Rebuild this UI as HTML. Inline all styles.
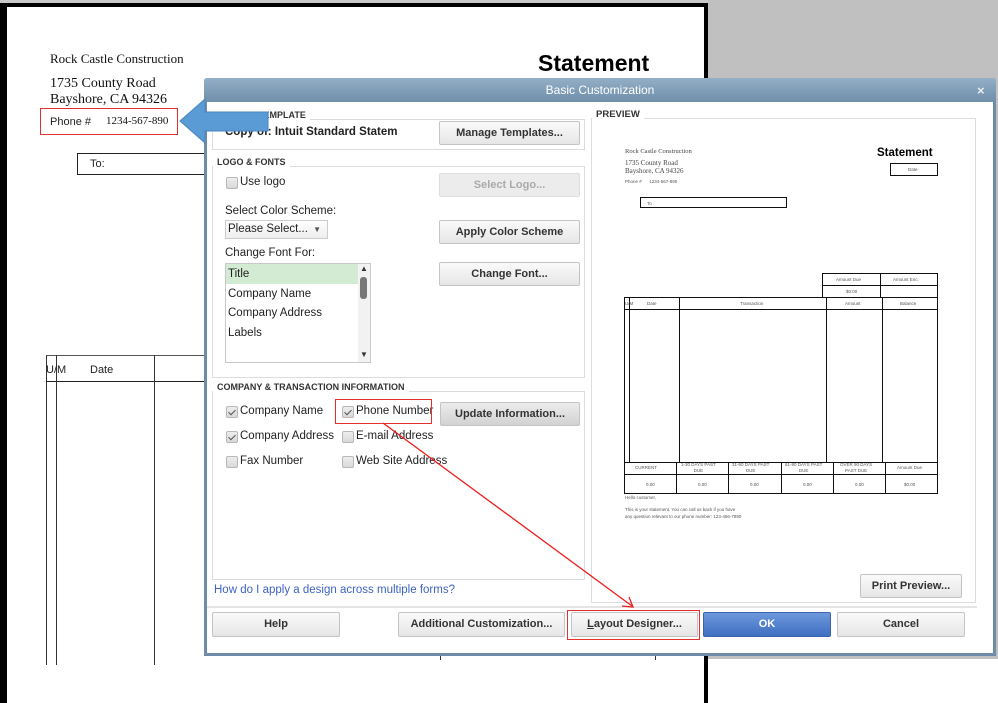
<!DOCTYPE html>
<html><head><meta charset="utf-8"><style>
*{box-sizing:border-box;margin:0;padding:0}
body{width:998px;height:659px;overflow:hidden;position:relative;background:#fff;font-family:"Liberation Sans",sans-serif;font-size:11.5px;color:#222}
.a{position:absolute}
.serif{font-family:"Liberation Serif",serif;color:#111}
.btn{position:absolute;border:1px solid #c4c4c4;border-radius:2px;background:linear-gradient(#fafafa,#e6e6e6);text-align:center;font-weight:bold;color:#333;font-size:11px}
.grp{position:absolute;border:1px solid #dcdcdc}
.lbl{position:absolute;background:#fff;font-weight:bold;font-size:9px;color:#333;padding:0 4px 0 4px}
.cb{position:absolute;width:12px;height:12px;border:1px solid #b8b8b8;border-radius:2px;background:linear-gradient(#eee,#d8d8d8)}
.cb.on::after{content:"";position:absolute;left:3px;top:1px;width:3px;height:6px;border:solid #555;border-width:0 1.5px 1.5px 0;transform:rotate(45deg)}
.t{position:absolute;font-size:11.5px;color:#222;white-space:nowrap}
.pv{position:absolute;border:1px solid #111}
.tiny{position:absolute;font-size:4.5px;color:#555;white-space:nowrap}
</style></head><body>
<div class="a" style="left:0;top:0;width:998px;height:3px;background:#c8c8c8"></div>
<div class="a" style="left:708px;top:0;width:290px;height:659px;background:#c0c0c0"></div>
<div class="a" style="left:0;top:3px;width:708px;height:700px;border:solid #000;border-width:4px 0 0 7px;border-right:4px solid #000;background:#fff"></div>
<div class="a serif" style="left:50px;top:51px;font-size:13px">Rock Castle Construction</div>
<div class="a serif" style="left:50px;top:76px;font-size:14px;line-height:16px">1735 County Road<br>Bayshore, CA 94326</div>
<div class="a" style="left:40px;top:108px;width:138px;height:27px;border:1px solid #e23030"></div>
<div class="a" style="left:50px;top:116px;font-size:11px">Phone #</div>
<div class="a serif" style="left:106px;top:115px;font-size:11px">1234-567-890</div>
<div class="a" style="left:77px;top:153px;width:140px;height:22px;border:1px solid #222;border-width:1px 0 1.5px 1px"></div>
<div class="a" style="left:90px;top:158px;font-size:11px">To:</div>
<div class="a" style="left:538px;top:50px;font-size:23px;font-weight:bold;color:#000">Statement</div>
<div class="a" style="left:46px;top:355px;width:170px;height:310px;border-left:1px solid #333;border-top:1px solid #555"></div>
<div class="a" style="left:46px;top:381px;width:170px;border-top:1px solid #222"></div>
<div class="a" style="left:56px;top:355px;height:310px;border-left:1px solid #333"></div>
<div class="a" style="left:154px;top:355px;height:310px;border-left:1px solid #333"></div>
<div class="a" style="left:46px;top:364px;font-size:11px">U/M</div>
<div class="a" style="left:90px;top:364px;font-size:11px">Date</div>
<div class="a" style="left:440px;top:650px;height:10px;border-left:1px solid #333"></div>
<div class="a" style="left:655px;top:650px;height:10px;border-left:1px solid #333"></div>

<div class="a" style="left:204px;top:78px;width:792px;height:578px;background:#6e8ca8;border-radius:3px 3px 0 0"></div>
<div class="a" style="left:204px;top:78px;width:792px;height:24px;background:linear-gradient(#94afc6,#6f8eaa);border-radius:3px 3px 0 0;color:#fff;text-align:center;line-height:25px;font-size:12px">Basic Customization</div>
<div class="a" style="left:977px;top:83px;color:#e8eef3;font-weight:bold;font-size:13px">×</div>
<div class="a" style="left:207px;top:102px;width:786px;height:551px;background:#fff"></div>

<div class="grp" style="left:212px;top:119px;width:373px;height:31px"></div>
<div class="lbl" style="left:216px;top:110px">SELECT TEMPLATE</div>
<div class="a" style="left:225px;top:126px;font-weight:bold;font-size:11.5px">Copy of: Intuit Standard Statem</div>
<div class="btn" style="left:439px;top:121px;width:141px;height:24px;line-height:22px">Manage Templates...</div>
<div class="grp" style="left:212px;top:166px;width:373px;height:212px"></div>
<div class="lbl" style="left:213px;top:157px">LOGO &amp; FONTS</div>
<div class="cb" style="left:226px;top:177px"></div><div class="t" style="left:240px;top:176px">Use logo</div>
<div class="btn" style="left:439px;top:173px;width:141px;height:24px;line-height:22px;color:#aaa;background:#ececec;border-color:#ddd">Select Logo...</div>
<div class="t" style="left:225px;top:205px">Select Color Scheme:</div>
<div class="a" style="left:225px;top:220px;width:103px;height:19px;border:1px solid #ccc;background:linear-gradient(#fff,#eee);font-size:11.5px;padding:2px 0 0 2px">Please Select...<span style="position:absolute;right:6px;top:4px;font-size:8px;color:#555">▼</span></div>
<div class="btn" style="left:439px;top:220px;width:141px;height:24px;line-height:22px">Apply Color Scheme</div>
<div class="t" style="left:225px;top:247px">Change Font For:</div>
<div class="a" style="left:225px;top:263px;width:146px;height:100px;border:1px solid #c8c8c8;background:#fff"></div>
<div class="a" style="left:226px;top:264px;width:132px;height:20px;background:#d3ebd3"></div>
<div class="t" style="left:228px;top:268px">Title</div>
<div class="t" style="left:228px;top:288px">Company Name</div>
<div class="t" style="left:228px;top:307px">Company Address</div>
<div class="t" style="left:228px;top:327px">Labels</div>
<div class="a" style="left:358px;top:264px;width:12px;height:98px;background:#f2f2f2"></div>
<div class="a" style="left:360px;top:264px;font-size:8px;color:#333">▲</div>
<div class="a" style="left:360px;top:350px;font-size:8px;color:#333">▼</div>
<div class="a" style="left:360px;top:277px;width:7px;height:22px;background:#777;border-radius:3px"></div>
<div class="btn" style="left:439px;top:262px;width:141px;height:24px;line-height:22px">Change Font...</div>
<div class="grp" style="left:212px;top:391px;width:373px;height:189px"></div>
<div class="lbl" style="left:213px;top:382px">COMPANY &amp; TRANSACTION INFORMATION</div>
<div class="cb on" style="left:226px;top:406px"></div><div class="t" style="left:240px;top:405px">Company Name</div>
<div class="cb on" style="left:226px;top:431px"></div><div class="t" style="left:240px;top:430px">Company Address</div>
<div class="cb" style="left:226px;top:456px"></div><div class="t" style="left:240px;top:455px">Fax Number</div>
<div class="cb on" style="left:342px;top:406px"></div><div class="t" style="left:356px;top:405px">Phone Number</div>
<div class="cb" style="left:342px;top:431px"></div><div class="t" style="left:356px;top:430px">E-mail Address</div>
<div class="cb" style="left:342px;top:456px"></div><div class="t" style="left:356px;top:455px">Web Site Address</div>
<div class="a" style="left:335px;top:399px;width:97px;height:25px;border:1px solid #e23030"></div>
<div class="btn" style="left:440px;top:402px;width:140px;height:24px;line-height:22px;background:linear-gradient(#ececec,#d2d2d2)">Update Information...</div>
<div class="t" style="left:214px;top:584px;color:#3e63c4">How do I apply a design across multiple forms?</div>
<div class="grp" style="left:591px;top:118px;width:385px;height:485px"></div>
<div class="lbl" style="left:592px;top:109px;font-size:9.5px">PREVIEW</div>
<div class="a serif" style="left:625px;top:148px;font-size:6.5px;color:#444">Rock Castle Construction</div>
<div class="a serif" style="left:625px;top:159px;font-size:7px;color:#444;line-height:8px">1735 County Road<br>Bayshore, CA 94326</div>
<div class="tiny" style="left:625px;top:179px">Phone #&nbsp;&nbsp;&nbsp;&nbsp;&nbsp;&nbsp;1234-567-890</div>
<div class="a" style="left:877px;top:147px;font-size:11.5px;font-weight:bold;color:#000">Statement</div>
<div class="pv" style="left:890px;top:163px;width:48px;height:13px"></div><div class="tiny" style="left:908px;top:167px">Date</div>
<div class="pv" style="left:640px;top:197px;width:147px;height:11px"></div><div class="tiny" style="left:647px;top:201px">To</div>
<div class="pv" style="left:822px;top:273px;width:116px;height:25px"></div>
<div class="a" style="left:880px;top:273px;height:25px;border-left:1px solid #111"></div>
<div class="a" style="left:822px;top:285px;width:116px;border-top:1px solid #111"></div>
<div class="tiny" style="left:836px;top:277px">Amount Due</div><div class="tiny" style="left:893px;top:277px">Amount Enc.</div>
<div class="tiny" style="left:846px;top:289px">$0.00</div>
<div class="pv" style="left:624px;top:297px;width:314px;height:166px"></div>
<div class="a" style="left:624px;top:309px;width:314px;border-top:1px solid #111"></div>
<div class="a" style="left:629px;top:297px;height:166px;border-left:1px solid #111"></div>
<div class="a" style="left:679px;top:297px;height:166px;border-left:1px solid #111"></div>
<div class="a" style="left:826px;top:297px;height:166px;border-left:1px solid #111"></div>
<div class="a" style="left:882px;top:297px;height:166px;border-left:1px solid #111"></div>
<div class="tiny" style="left:625px;top:301px">U/M</div><div class="tiny" style="left:647px;top:301px">Date</div><div class="tiny" style="left:740px;top:301px">Transaction</div><div class="tiny" style="left:845px;top:301px">Amount</div><div class="tiny" style="left:900px;top:301px">Balance</div>
<div class="pv" style="left:624px;top:462px;width:314px;height:32px"></div>
<div class="a" style="left:624px;top:474px;width:314px;border-top:1px solid #111"></div>
<div class="a" style="left:676px;top:462px;height:32px;border-left:1px solid #111"></div>
<div class="a" style="left:728px;top:462px;height:32px;border-left:1px solid #111"></div>
<div class="a" style="left:781px;top:462px;height:32px;border-left:1px solid #111"></div>
<div class="a" style="left:833px;top:462px;height:32px;border-left:1px solid #111"></div>
<div class="a" style="left:885px;top:462px;height:32px;border-left:1px solid #111"></div>
<div class="tiny" style="left:635px;top:465px">CURRENT</div><div class="tiny" style="left:681px;top:462px;line-height:6px;text-align:center">1-30 DAYS PAST<br>DUE</div><div class="tiny" style="left:732px;top:462px;line-height:6px;text-align:center">31-60 DAYS PAST<br>DUE</div><div class="tiny" style="left:785px;top:462px;line-height:6px;text-align:center">61-90 DAYS PAST<br>DUE</div><div class="tiny" style="left:840px;top:462px;line-height:6px;text-align:center">OVER 90 DAYS<br>PAST DUE</div><div class="tiny" style="left:897px;top:465px">Amount Due</div>
<div class="tiny" style="left:646px;top:482px">0.00</div><div class="tiny" style="left:698px;top:482px">0.00</div><div class="tiny" style="left:750px;top:482px">0.00</div><div class="tiny" style="left:803px;top:482px">0.00</div><div class="tiny" style="left:855px;top:482px">0.00</div><div class="tiny" style="left:904px;top:482px">$0.00</div>
<div class="tiny" style="left:625px;top:495px">Hello customer,</div>
<div class="tiny" style="left:625px;top:506px;line-height:7px">This is your statement. You can call us back if you have<br>any question relevant to our phone number: 123-456-7890</div>
<div class="btn" style="left:860px;top:574px;width:102px;height:24px;line-height:22px">Print Preview...</div>
<div class="a" style="left:207px;top:606px;width:770px;border-top:2px solid #e4e4e4"></div>
<div class="btn" style="left:212px;top:612px;width:128px;height:25px;line-height:23px">Help</div>
<div class="btn" style="left:398px;top:612px;width:167px;height:25px;line-height:23px">Additional Customization...</div>
<div class="btn" style="left:571px;top:612px;width:127px;height:25px;line-height:23px"><u>L</u>ayout Designer...</div>
<div class="a" style="left:567px;top:610px;width:133px;height:30px;border:1px solid #e23030"></div>
<div class="btn" style="left:703px;top:612px;width:128px;height:25px;line-height:23px;color:#fff;background:linear-gradient(#6d98dc,#3f6fc2);border-color:#3a63b0">OK</div>
<div class="btn" style="left:837px;top:612px;width:128px;height:25px;line-height:23px">Cancel</div>
<svg class="a" style="left:0;top:0" width="998" height="659">
<polygon points="180,121 205,99 205,112 268,112 268,131 205,131 205,143" fill="#5b9bd5" stroke="#4a86bf" stroke-width="1"/>
<line x1="383" y1="423" x2="632" y2="606" stroke="#ee1c1c" stroke-width="1.3"/>
<polyline points="622,606 633,607 629,597" fill="none" stroke="#ee1c1c" stroke-width="1.3"/>
</svg>
</body></html>
